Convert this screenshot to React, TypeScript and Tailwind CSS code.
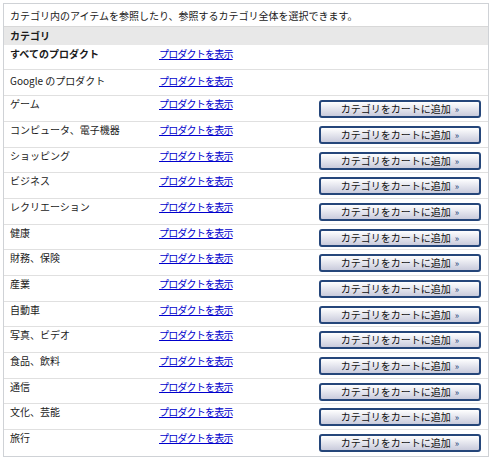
const categories = [
  "ゲーム",
  "コンピュータ、電子機器",
  "ショッピング",
  "ビジネス",
  "レクリエーション",
  "健康",
  "財務、保険",
  "産業",
  "自動車",
  "写真、ビデオ",
  "食品、飲料",
  "通信",
  "文化、芸能",
  "旅行",
];

const font = "font-['Noto_Sans_CJK_JP','Noto_Sans',sans-serif]";

function ViewLink() {
  return (
    <a href="#" className="tracking-[-0.8px] text-[#0000cc] underline">
      プロダクトを表示
    </a>
  );
}

function AddButton() {
  return (
    <button className="mt-[4px] flex h-[18px] w-[162px] items-center justify-center rounded-[3px] border-2 border-[#25467a] bg-gradient-to-b from-white to-[#c9cbdc] text-[10px] leading-none text-[#111]">
      カテゴリをカートに追加 <span className="ml-1 text-[9px] text-[#25467a]">»</span>
    </button>
  );
}

export default function App() {
  return (
    <div className={`${font} h-[459px] w-[493px] bg-white pl-[3px] pt-[3px] text-[10px] leading-[14px] text-[#1a1a1a]`}>
      <div className="w-[486px] border border-[#cfd2d6]">
        <div className="flex h-[23px] items-center border-b border-[#d8d8d8] pl-[6px] pt-px">
          カテゴリ内のアイテムを参照したり、参照するカテゴリ全体を選択できます。
        </div>
        <div className="flex h-[18px] items-center bg-[#e8e8e8] pl-[6px] font-bold">
          カテゴリ
        </div>
        <div className="flex h-[25px] border-b border-[#e0e0e0]">
          <div className="w-[155px] pl-[6px] pt-[2px] font-bold">すべてのプロダクト</div>
          <div className="pt-[2px]"><ViewLink /></div>
        </div>
        <div className="flex h-[26px] border-b border-[#e0e0e0]">
          <div className="w-[155px] pl-[6px] pt-[4px]">Google のプロダクト</div>
          <div className="pt-[4px]"><ViewLink /></div>
        </div>
        {categories.map((c, i) => (
          <div
            key={c}
            className={`flex border-[#e0e0e0] ${i % 3 === 2 ? "h-[25px]" : "h-[26px]"} ${i === categories.length - 1 ? "" : "border-b"}`}
          >
            <div className="w-[155px] pl-[6px] pt-px">{c}</div>
            <div className="w-[160px] pt-px"><ViewLink /></div>
            <AddButton />
          </div>
        ))}
      </div>
    </div>
  );
}
